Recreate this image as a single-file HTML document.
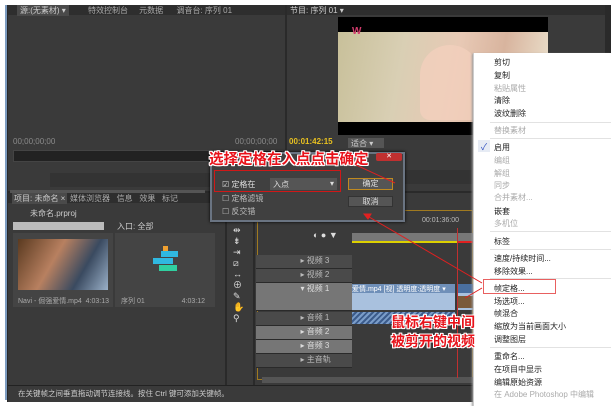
<!DOCTYPE html>
<html><head><meta charset="utf-8"><style>
body{margin:0;width:611px;height:406px;background:#fff;position:relative;overflow:hidden;font-family:"Liberation Sans","Noto Sans CJK SC",sans-serif;font-size:8px;color:#aaa}
div{position:absolute;box-sizing:border-box}
.t{white-space:nowrap}
.ann{color:#e8121a;font-weight:bold;font-size:14.5px;text-shadow:1px 1px 0 #fff,-1px -1px 0 #fff,1px -1px 0 #fff,-1px 1px 0 #fff,0 1px 0 #fff,0 -1px 0 #fff,1px 0 0 #fff,-1px 0 0 #fff;white-space:nowrap}
.m{left:20px;font-size:8px;color:#222;white-space:nowrap}
.g{color:#aaa}
.sep{left:16px;right:0;height:1px;background:#e2e2e2}
.trk{left:0;width:96px;height:14px;border-bottom:1px solid #2a2a2a;background:#4a4a4a;color:#bbb}
</style></head><body>
<div style="left:5px;top:5px;width:2px;height:395px;background:#7d9cc0"></div>
<div style="left:7px;top:5px;width:604px;height:397px;background:#2a2a2a"></div>
<!-- source panel -->
<div style="left:8px;top:5px;width:277px;height:186px;background:#3a3a3a"></div>
<div style="left:8px;top:5px;width:277px;height:10px;background:#2e2e2e"></div>
<div class="t" style="left:17px;top:5px;background:#4a4a4a;padding:0 3px;color:#ccc">源:(无素材) ▾</div>
<div class="t" style="left:88px;top:5px">特效控制台 &nbsp; &nbsp; 元数据 &nbsp; &nbsp; &nbsp;调音台: 序列 01</div>
<div class="t" style="left:13px;top:137px;color:#8a8a8a;font-size:8px">00;00;00;00</div>
<div class="t" style="left:235px;top:137px;color:#8a8a8a;font-size:8px">00;00;00;00</div>
<div style="left:13px;top:150px;width:270px;height:12px;background:#222;border:1px solid #444"></div>
<div style="left:50px;top:173px;width:170px;height:14px;background:#333"></div>
<div style="left:10px;top:190px;width:195px;height:3px;background:#555"></div>
<!-- program panel -->
<div style="left:287px;top:5px;width:318px;height:186px;background:#3a3a3a"></div>
<div style="left:287px;top:5px;width:318px;height:10px;background:#2e2e2e"></div>
<div class="t" style="left:290px;top:5px;color:#ccc">节目: 序列 01 ▾</div>
<div style="left:338px;top:17px;width:210px;height:118px;background:#000"></div>
<div style="left:338px;top:32px;width:210px;height:90px;background:linear-gradient(100deg,#c8c09a 0%,#d9cfb4 30%,#e8c9b5 55%,#d8b49e 75%,#ece4d0 100%)"></div>
<div style="left:420px;top:45px;width:60px;height:75px;border-radius:30px 30px 10px 10px;background:#f2cfbd;opacity:.8"></div>
<div class="t" style="left:352px;top:26px;color:#d23b6c;font-weight:bold;font-size:10px">W</div>
<div class="t" style="left:289px;top:137px;color:#e8c020;font-weight:bold;font-size:8px">00:01:42:15</div>
<div class="t" style="left:348px;top:138px;width:36px;height:10px;background:#555;color:#ccc;padding-left:3px">适合 ▾</div>
<div style="left:405px;top:170px;width:70px;height:14px;background:#333"></div>
<!-- project panel -->
<div style="left:8px;top:193px;width:217px;height:192px;background:#3a3a3a"></div>
<div style="left:8px;top:193px;width:217px;height:10px;background:#2e2e2e"></div>
<div class="t" style="left:12px;top:193px;color:#ccc;background:#4a4a4a;padding:0 2px">项目: 未命名 ×</div>
<div class="t" style="left:70px;top:193px">媒体浏览器 &nbsp; 信息 &nbsp; 效果 &nbsp; 标记</div>
<div class="t" style="left:30px;top:208px;color:#ccc">未命名.prproj</div>
<div style="left:13px;top:222px;width:91px;height:8px;background:#bbb"></div>
<div class="t" style="left:117px;top:221px;color:#ccc">入口: 全部</div>
<div style="left:13px;top:233px;width:100px;height:74px;background:#444"></div>
<div style="left:115px;top:233px;width:100px;height:74px;background:#444"></div>
<div style="left:18px;top:239px;width:90px;height:51px;background:linear-gradient(120deg,#5a3a20,#b88060 40%,#3a4a60 70%,#9ab0c8)"></div>
<div class="t" style="left:18px;top:296px;font-size:7px">Navi - 倔强爱情.mp4 &nbsp;4:03:13</div>
<div class="t" style="left:121px;top:296px;font-size:7px">序列 01 &nbsp; &nbsp; &nbsp; &nbsp; &nbsp; &nbsp; &nbsp; &nbsp; &nbsp; 4:03:12</div>
<div style="left:161px;top:251px;width:17px;height:6px;background:#30b8e0"></div>
<div style="left:153px;top:258px;width:20px;height:6px;background:#30b8e0"></div>
<div style="left:159px;top:265px;width:18px;height:6px;background:#30d0a0"></div>
<div style="left:163px;top:246px;width:5px;height:5px;background:#f0a030"></div>
<div style="left:8px;top:385px;width:597px;height:17px;background:#3a3a3a;border-top:1px solid #222"></div>
<div class="t" style="left:18px;top:388px;color:#ccc;font-size:7.5px">在关键帧之间垂直拖动调节连接线。按住 Ctrl 键可添加关键帧。</div>
<!-- tools -->
<div style="left:227px;top:193px;width:26px;height:192px;background:#3a3a3a"></div>
<div class="t" style="left:233px;top:225px;color:#ddd;line-height:11px;font-size:9px">⇹<br>⇟<br>⇥<br>⧄<br>↔<br>⊕<br>✎<br>✋<br>⚲</div>
<!-- timeline -->
<div style="left:255px;top:193px;width:218px;height:192px;background:#3a3a3a"></div>
<div style="left:257px;top:210px;width:216px;height:170px;border:1px solid #a07a20"></div>
<div class="t" style="left:422px;top:217px;color:#bbb;font-size:7px">00:01:36:00</div>
<div style="left:352px;top:233px;width:121px;height:8px;background:#777"></div>
<div style="left:352px;top:241px;width:105px;height:2px;background:#dcd000"></div>
<div style="left:457px;top:241px;width:16px;height:2px;background:#e02020"></div>
<div class="t" style="left:313px;top:230px;color:#ddd;font-size:9px">◐ ● ▼</div>
<div style="left:256px;top:255px;width:96px;height:120px">
<div class="trk" style="top:0">&nbsp; &nbsp; &nbsp; &nbsp; &nbsp; &nbsp; &nbsp; &nbsp; &nbsp; &nbsp; ▸ 视频 3</div>
<div class="trk" style="top:14px">&nbsp; &nbsp; &nbsp; &nbsp; &nbsp; &nbsp; &nbsp; &nbsp; &nbsp; &nbsp; ▸ 视频 2</div>
<div class="trk" style="top:28px;height:28px;background:#767676;color:#ddd">&nbsp; &nbsp; &nbsp; &nbsp; &nbsp; &nbsp; &nbsp; &nbsp; &nbsp; &nbsp; ▾ 视频 1</div>
<div class="trk" style="top:57px">&nbsp; &nbsp; &nbsp; &nbsp; &nbsp; &nbsp; &nbsp; &nbsp; &nbsp; &nbsp; ▸ 音频 1</div>
<div class="trk" style="top:71px;background:#767676;color:#ddd">&nbsp; &nbsp; &nbsp; &nbsp; &nbsp; &nbsp; &nbsp; &nbsp; &nbsp; &nbsp; ▸ 音频 2</div>
<div class="trk" style="top:85px;background:#767676;color:#ddd">&nbsp; &nbsp; &nbsp; &nbsp; &nbsp; &nbsp; &nbsp; &nbsp; &nbsp; &nbsp; ▸ 音频 3</div>
<div class="trk" style="top:99px">&nbsp; &nbsp; &nbsp; &nbsp; &nbsp; &nbsp; &nbsp; &nbsp; &nbsp; &nbsp; ▸ 主音轨</div>
</div>
<div style="left:352px;top:284px;width:103px;height:26px;background:#a9c1de"></div>
<div class="t" style="left:352px;top:284px;width:103px;height:9px;background:#6f8fb8;color:#fff;font-size:7px;overflow:hidden">爱情.mp4 [视] 透明度:透明度 ▾</div>
<div style="left:457px;top:284px;width:16px;height:26px;background:#a9c1de"></div>
<div style="left:457px;top:284px;width:16px;height:9px;background:#4a6fa0"></div>
<div style="left:457px;top:296px;width:16px;height:12px;background:#7a5a3a"></div>
<div style="left:352px;top:312px;width:103px;height:12px;background:repeating-linear-gradient(135deg,#7a9cc8 0 2px,#3c5c8c 2px 4px)"></div>
<div style="left:262px;top:377px;width:211px;height:6px;background:#555"></div>
<div style="left:457px;top:228px;width:1px;height:150px;background:#c03030"></div>
<!-- dialog -->
<div style="left:210px;top:152px;width:195px;height:70px;background:#404040;border:2px solid #6a7482;box-shadow:0 0 3px #000"></div>
<div style="left:376px;top:153px;width:26px;height:8px;background:#c03030;border-radius:2px;color:#fff;text-align:center;font-size:7px;line-height:8px">✕</div>
<div style="left:214px;top:170px;width:127px;height:22px;border:1px solid #d01818"></div>
<div class="t" style="left:222px;top:179px;color:#ddd">☑ 定格在</div>
<div class="t" style="left:270px;top:178px;width:67px;height:12px;background:#555;color:#ddd;padding:1px 3px;font-size:8px">入点<span style="float:right">▾</span></div>
<div class="t" style="left:222px;top:193px;color:#bbb">☐ 定格滤镜</div>
<div class="t" style="left:222px;top:206px;color:#bbb">☐ 反交错</div>
<div class="t" style="left:348px;top:178px;width:45px;height:12px;background:#555;border:1px solid #c08a20;color:#ddd;text-align:center;line-height:10px">确定</div>
<div class="t" style="left:348px;top:196px;width:45px;height:11px;background:#555;border:1px solid #333;color:#ddd;text-align:center;line-height:9px">取消</div>
<div class="ann" style="left:209px;top:148px">选择定格在入点点击确定</div>
<!-- context menu -->
<div style="left:473px;top:53px;width:138px;height:353px;background:#fff;border-left:1px solid #ccc;box-shadow:-1px 1px 2px #999">
<div class="m" style="top:4px">剪切</div>
<div class="m" style="top:17px">复制</div>
<div class="m g" style="top:30px">粘贴属性</div>
<div class="m" style="top:42px">清除</div>
<div class="m" style="top:55px">波纹删除</div>
<div class="sep" style="top:69px"></div>
<div class="m g" style="top:72px">替换素材</div>
<div class="sep" style="top:85px"></div>
<div class="m" style="top:89px">启用</div>
<div style="left:4px;top:87px;width:12px;height:12px;background:#e6ebf4;color:#3050c0;font-size:9px;text-align:center">✓</div>
<div class="m g" style="top:102px">编组</div>
<div class="m g" style="top:115px">解组</div>
<div class="m g" style="top:127px">同步</div>
<div class="m g" style="top:139px">合并素材...</div>
<div class="m" style="top:153px">嵌套</div>
<div class="m g" style="top:165px">多机位</div>
<div class="sep" style="top:178px"></div>
<div class="m" style="top:183px">标签</div>
<div class="sep" style="top:196px"></div>
<div class="m" style="top:200px">速度/持续时间...</div>
<div class="m" style="top:213px">移除效果...</div>
<div class="sep" style="top:225px"></div>
<div style="left:9px;top:226px;width:73px;height:15px;border:1px solid #e86060"></div>
<div class="m" style="top:230px">帧定格...</div>
<div class="m" style="top:243px">场选项...</div>
<div class="m" style="top:255px">帧混合</div>
<div class="m" style="top:268px">缩放为当前画面大小</div>
<div class="m" style="top:281px">调整图层</div>
<div class="sep" style="top:294px"></div>
<div class="m" style="top:298px">重命名...</div>
<div class="m" style="top:311px">在项目中显示</div>
<div class="m" style="top:324px">编辑原始资源</div>
<div class="m g" style="top:336px">在 Adobe Photoshop 中编辑</div>
</div>
<!-- arrows -->
<svg style="position:absolute;left:0;top:0" width="611" height="406"><g stroke="#e02020" stroke-width="1" fill="#e02020">
<line x1="356" y1="165" x2="395" y2="183"/>
<line x1="482" y1="283" x2="364" y2="214"/>
<line x1="482" y1="288" x2="465" y2="298"/>
<polygon points="364,214 371,214 368,219"/>
</g></svg>
<div class="ann" style="left:391px;top:313px;font-size:14px;line-height:19px">鼠标右键中间<br>被剪开的视频</div>
</body></html>
